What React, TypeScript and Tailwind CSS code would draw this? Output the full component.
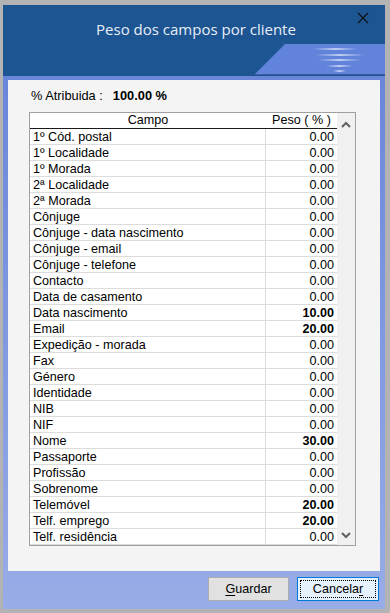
import React from 'react';

interface Campo {
  nome: string;
  peso: number;
}

const campos: Campo[] = [
  { nome: '1º Cód. postal', peso: 0 },
  { nome: '1º Localidade', peso: 0 },
  { nome: '1º Morada', peso: 0 },
  { nome: '2ª Localidade', peso: 0 },
  { nome: '2ª Morada', peso: 0 },
  { nome: 'Cônjuge', peso: 0 },
  { nome: 'Cônjuge - data nascimento', peso: 0 },
  { nome: 'Cônjuge - email', peso: 0 },
  { nome: 'Cônjuge - telefone', peso: 0 },
  { nome: 'Contacto', peso: 0 },
  { nome: 'Data de casamento', peso: 0 },
  { nome: 'Data nascimento', peso: 10 },
  { nome: 'Email', peso: 20 },
  { nome: 'Expedição - morada', peso: 0 },
  { nome: 'Fax', peso: 0 },
  { nome: 'Género', peso: 0 },
  { nome: 'Identidade', peso: 0 },
  { nome: 'NIB', peso: 0 },
  { nome: 'NIF', peso: 0 },
  { nome: 'Nome', peso: 30 },
  { nome: 'Passaporte', peso: 0 },
  { nome: 'Profissão', peso: 0 },
  { nome: 'Sobrenome', peso: 0 },
  { nome: 'Telemóvel', peso: 20 },
  { nome: 'Telf. emprego', peso: 20 },
  { nome: 'Telf. residência', peso: 0 },
];

const TitleDecoration = () => (
  <svg className="absolute right-0 bottom-0" width="130" height="32" viewBox="0 0 130 32">
    <defs>
      <linearGradient id="streak" x1="0" y1="0" x2="1" y2="0">
        <stop offset="0" stopColor="#c4d1f6" stopOpacity="0" />
        <stop offset="0.5" stopColor="#c4d1f6" stopOpacity="0.95" />
        <stop offset="1" stopColor="#c4d1f6" stopOpacity="0" />
      </linearGradient>
    </defs>
    <polygon points="0,30 30,0 130,0 130,30" fill="#6283da" />
    <rect x="0" y="30" width="130" height="1" fill="#3b5cab" />
    <rect x="58" y="4" width="44" height="2" fill="url(#streak)" />
    <rect x="60" y="10" width="50" height="2" fill="url(#streak)" />
    <rect x="63" y="15" width="43" height="2" fill="url(#streak)" />
    <rect x="71" y="21" width="27" height="2" fill="url(#streak)" />
    <rect x="78" y="26" width="13" height="2" fill="url(#streak)" />
  </svg>
);

const Chevron = ({ up }: { up?: boolean }) => (
  <svg width="10" height="7" viewBox="0 0 10 7">
    <polyline
      points={up ? '1,6 5,2 9,6' : '1,1 5,5 9,1'}
      fill="none"
      stroke="#5f5f5f"
      strokeWidth="2"
    />
  </svg>
);

export default function App() {
  return (
    <div className="w-[390px] h-[613px] bg-[#b3b3b3] pt-[5px] pl-[3px] pr-[5px] pb-[4px] flex flex-col font-['Liberation_Sans',Arial,sans-serif] text-[12.6px] text-black">
      {/* Title bar */}
      <div className="relative h-[71px] shrink-0 bg-[#1d5592]">
        <div className="pt-[12px] pl-[4px] text-center font-['Open_Sans',sans-serif] text-[15px] leading-[24px] text-[#e8eef8]">
          Peso dos campos por cliente
        </div>
        <svg className="absolute top-[7px] right-[16px]" width="12" height="12" viewBox="0 0 12 12">
          <path d="M1 1 L11 11 M11 1 L1 11" stroke="#101010" strokeWidth="1.2" fill="none" />
        </svg>
        <TitleDecoration />
      </div>

      {/* Body */}
      <div className="flex-1 flex flex-col px-[5px] pt-[4px] bg-gradient-to-b from-[#6a86d9] to-[#98ace7]">
        <div className="h-[491px] bg-[#f4f4f4] pl-[21px] pr-[24px] pt-[8px]">
          <div className="flex items-center h-[16px] leading-[16px] pl-[2px] text-[12.8px]">
            <span>% Atribuida :</span>
            <span className="ml-[10px] font-bold">100.00 %</span>
          </div>

          {/* Grid */}
          <div className="mt-[8px] flex border border-[#a0a0a0] bg-white">
            <div className="flex-1">
              <div className="flex h-[16px] border-b border-[#1a1a1a] leading-[15px]">
                <div className="w-[236px] text-center">Campo</div>
                <div className="flex-1 text-center">Peso ( % )</div>
              </div>
              {campos.map((c) => (
                <div key={c.nome} className="flex h-[16px] border-b border-[#dcdcdc] leading-[16px]">
                  <div className="w-[236px] pl-[3px] border-r border-[#dcdcdc] truncate">{c.nome}</div>
                  <div className={`flex-1 text-right pr-[3px] ${c.peso > 0 ? 'font-bold' : ''}`}>
                    {c.peso.toFixed(2)}
                  </div>
                </div>
              ))}
            </div>
            <div className="w-[18px] bg-[#f0f0f0] flex flex-col items-center justify-between pt-[8px] pb-[6px]">
              <Chevron up />
              <Chevron />
            </div>
          </div>
        </div>

        {/* Footer */}
        <div className="flex justify-end gap-[8px] pt-[6px] pr-[1px]">
          <button className="w-[81px] h-[24px] bg-[#e1e1e1] border border-[#adadad] text-[12.6px]">
            <span className="underline underline-offset-2">G</span>uardar
          </button>
          <button className="w-[82px] h-[24px] bg-[#e5f1fb] border border-[#0078d7] p-[2px] text-[12.6px]">
            <span className="flex items-center justify-center w-full h-full border border-dotted border-black">
              <span>
                Cancela<span className="underline underline-offset-2">r</span>
              </span>
            </span>
          </button>
        </div>
      </div>
    </div>
  );
}
